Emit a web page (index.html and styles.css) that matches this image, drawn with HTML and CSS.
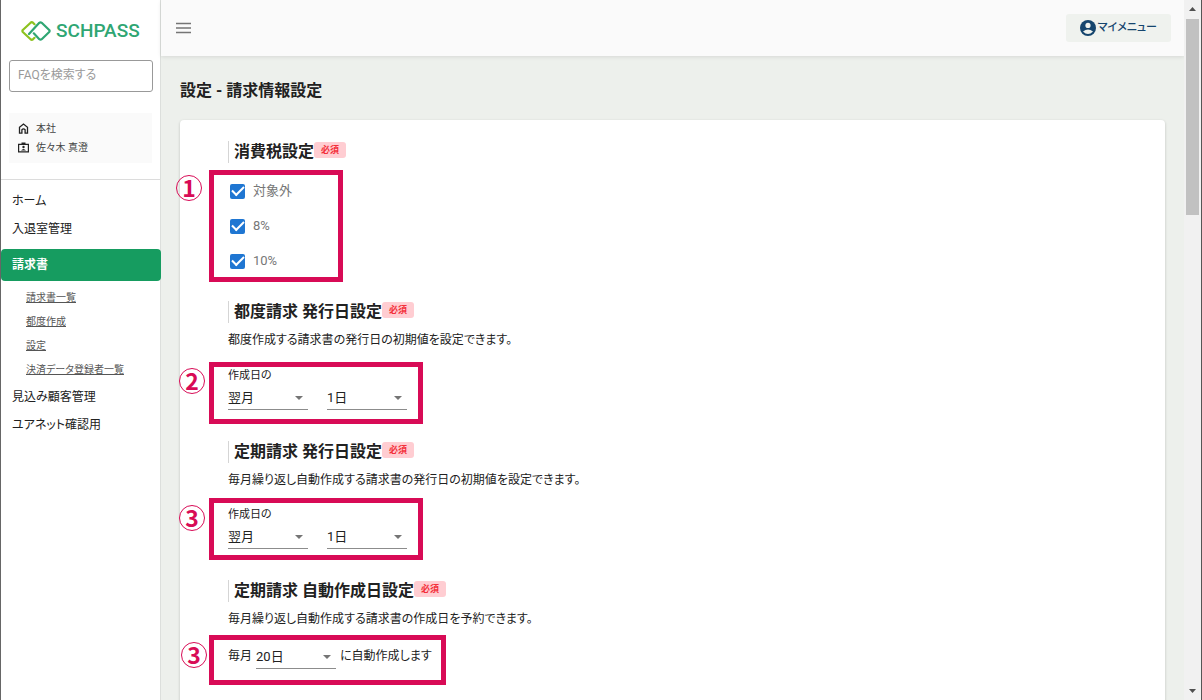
FILE: index.html
```html
<!DOCTYPE html>
<html lang="ja">
<head>
  <meta charset="UTF-8">
  <meta name="viewport" content="width=device-width, initial-scale=1">
  <title>設定 - 請求情報設定</title>
  <link rel="stylesheet" href="styles.css">
</head>
<body>
<aside class="sidebar">
  <a class="logo" href="#">
    <svg width="30" height="20" viewBox="0 0 30 20" fill="none" stroke-width="2.2" stroke-linecap="round" stroke-linejoin="round">
      <path d="M13.5 3.2 L12 1.7 Q10.8 .8 9.6 1.7 L1.8 9 Q1 10 1.8 11 L9.6 18.3 Q10.8 19.2 12 18.3 L13.5 16.8" stroke="#8dc21f"/>
      <path d="M8 13 L18.3 1.8 Q19.5 .8 20.7 1.8 L28.2 9 Q29 10 28.2 11 L20.7 18.2 Q19.5 19.2 18.3 18.2 L12.8 12.3" stroke="#2fa673"/>
    </svg>
    <span>SCHPASS</span>
  </a>
  <input class="search" type="text" placeholder="FAQを検索する" aria-label="FAQを検索する">
  <div class="account">
    <div class="account-row">
      <svg width="10" height="11" viewBox="0 0 10 11" fill="none" stroke="#222" stroke-width="1.3"><path d="M1 4.2 L5 1 L9 4.2 V10.2 H6.6 V6.8 Q5 5 3.4 6.8 V10.2 H1 Z"/></svg>
      <span>本社</span>
    </div>
    <div class="account-row">
      <svg width="11" height="11" viewBox="0 0 11 11"><path d="M.6 2.3 H10.4 V9.8 H.6 Z" fill="none" stroke="#222" stroke-width="1.2"/><path d="M3.5 .5 H7.5 V2.5 H3.5 Z" fill="#222"/><circle cx="5.5" cy="5" r="1.2" fill="#222"/><path d="M3 8.4 Q5.5 5.4 8 8.4 Z" fill="#222"/></svg>
      <span>佐々木 真澄</span>
    </div>
  </div>
  <nav class="nav">
    <a class="nav-item" href="#">ホーム</a>
    <a class="nav-item" href="#">入退室管理</a>
    <a class="nav-item active" href="#">請求書</a>
    <a class="nav-sub" href="#">請求書一覧</a>
    <a class="nav-sub" href="#">都度作成</a>
    <a class="nav-sub" href="#">設定</a>
    <a class="nav-sub" href="#">決済データ登録者一覧</a>
    <a class="nav-item" href="#">見込み顧客管理</a>
    <a class="nav-item" href="#">ユアネット確認用</a>
  </nav>
</aside>

<div class="main">
  <header class="topbar">
    <button class="menu-button" type="button" aria-label="メニュー">
      <svg width="16" height="12" viewBox="0 0 16 12" stroke="#757575" stroke-width="1.4"><path d="M0 1.5 H15 M0 6 H15 M0 10.5 H15"/></svg>
    </button>
    <button class="my-menu" type="button">
      <svg width="16" height="16" viewBox="0 0 16 16"><circle cx="8" cy="8" r="8" fill="#15456e"/><circle cx="8" cy="5.4" r="2.6" fill="#eff2ee"/><path d="M3 11.6 Q8 7.4 13 11.6 Q8 16.6 3 11.6 Z" fill="#eff2ee"/></svg>
      <span>マイメニュー</span>
    </button>
  </header>

  <main class="content">
    <h1>設定 - 請求情報設定</h1>
    <form class="card">
      <section>
        <h2>消費税設定<span class="required">必須</span></h2>
        <div class="frame frame-tax">
          <span class="number">1</span>
          <label class="check"><input type="checkbox" checked>対象外</label>
          <label class="check"><input type="checkbox" checked>8%</label>
          <label class="check"><input type="checkbox" checked>10%</label>
        </div>
      </section>

      <section>
        <h2>都度請求 発行日設定<span class="required">必須</span></h2>
        <p>都度作成する請求書の発行日の初期値を設定できます。</p>
        <div class="frame frame-once">
          <span class="number">2</span>
          <label class="field-label" for="onceMonth">作成日の</label>
          <div class="fields">
            <div class="select"><select id="onceMonth"><option>翌月</option></select></div>
            <div class="select"><select aria-label="日"><option>1日</option></select></div>
          </div>
        </div>
      </section>

      <section>
        <h2>定期請求 発行日設定<span class="required">必須</span></h2>
        <p>毎月繰り返し自動作成する請求書の発行日の初期値を設定できます。</p>
        <div class="frame frame-regular">
          <span class="number">3</span>
          <label class="field-label" for="regularMonth">作成日の</label>
          <div class="fields">
            <div class="select"><select id="regularMonth"><option>翌月</option></select></div>
            <div class="select"><select aria-label="日"><option>1日</option></select></div>
          </div>
        </div>
      </section>

      <section>
        <h2>定期請求 自動作成日設定<span class="required">必須</span></h2>
        <p>毎月繰り返し自動作成する請求書の作成日を予約できます。</p>
        <div class="frame frame-auto">
          <span class="number">3</span>
          <label for="autoDay">毎月</label>
          <div class="select"><select id="autoDay"><option>20日</option></select></div>
          <span>に自動作成します</span>
        </div>
      </section>
    </form>
  </main>
</div>

<div class="scrollbar">
  <svg width="7" height="4" viewBox="0 0 7 4"><path d="M0 4 L3.5 0 L7 4 Z" fill="#505050"/></svg>
  <div class="thumb"></div>
  <svg width="7" height="4" viewBox="0 0 7 4"><path d="M0 0 L3.5 4 L7 0 Z" fill="#505050"/></svg>
</div>
</body>
</html>
```

FILE: styles.css
```css
* { box-sizing: border-box; }
body { margin: 0; height: 100vh; display: flex; overflow: hidden; border-left: 1px solid #666; border-right: 1px solid #555; background: #edf0ec; color: #212121; font-family: Roboto, "Noto Sans CJK JP", sans-serif; font-size: 13px; line-height: 20px; font-feature-settings: "palt"; }
button, input, select { font: inherit; color: inherit; font-feature-settings: inherit; }
svg { display: block; flex: none; }

/* sidebar */
.sidebar { width: 160px; flex: none; background: #fff; border-right: 1px solid #dcdfdc; }
.logo { display: flex; align-items: center; gap: 5px; height: 60px; padding: 2px 0 0 20px; color: #2fa673; font-size: 19px; font-weight: 500; text-decoration: none; }
.search { display: block; width: 144px; height: 32px; margin: 0 8px; padding: 0 8px 2px; border: 1px solid #999; border-radius: 3px; background: #fff; font-size: 12px; }
.search::placeholder { color: #9a9a9a; opacity: 1; }
.account { margin: 21px 8px 16px; padding: 6px 9px; background: #fafafa; font-size: 10px; }
.account-row { display: flex; align-items: center; gap: 7px; height: 19px; color: #444; }
.account-row svg { width: 11px; }
.nav { padding-top: 7px; border-top: 1px solid #dcdcdc; display: flex; flex-direction: column; }
.nav-item { padding: 4px 11px; color: #212121; font-size: 12px; text-decoration: none; }
.nav-item.active { margin: 6px -1px 5px 0; padding: 6px 11px; border-radius: 4px; background: #169c60; color: #fff; font-weight: 700; }
.nav-sub { padding: 2px 25px; color: #555; font-size: 10px; text-decoration: underline; white-space: nowrap; }
.nav-sub + .nav-item { margin-top: 1px; }

/* header */
.main { flex: 1; min-width: 0; display: flex; flex-direction: column; }
.topbar { display: flex; flex: none; align-items: center; justify-content: space-between; height: 56px; padding: 0 13px 0 15px; background: #fafafa; box-shadow: 0 1px 4px rgba(0,0,0,0.1); }
.menu-button { padding: 0; border: none; background: none; }
.my-menu { display: flex; align-items: center; gap: 2px; height: 28px; padding: 0 14px; border: none; border-radius: 3px; background: #eff2ee; color: #15456e; font-size: 11px; font-weight: 500; }

/* settings */
.content { padding: 24px 19px 0; }
h1, h2 { font-size: 16px; line-height: 22px; font-weight: 700; font-feature-settings: normal; }
h1 { margin: 0 0 18px; }
.card { min-height: 100vh; padding: 21px 48px; border-radius: 4px; background: #fff; box-shadow: 0 1px 3px rgba(0,0,0,0.2); }
h2 { display: flex; align-items: flex-start; margin: 0; padding-left: 5px; border-left: 1px solid #d5d5d5; }
.required { margin-top: 1px; padding: 0 7px; border-radius: 3px; background: #ffcdd2; color: #f3303a; font-size: 9px; line-height: 16px; }
p { margin: 7px 0 0; font-size: 12px; }

/* numbered frames */
.frame { position: relative; width: fit-content; margin-left: -19px; padding-left: 14px; border: 5px solid #d80b56; }
.number { position: absolute; left: -38px; width: 26px; height: 26px; border: 1px solid #d80b56; border-radius: 50%; color: #d80b56; font-family: "Noto Sans CJK JP", sans-serif; font-size: 23px; line-height: 22px; font-weight: 700; text-align: center; }
.frame-tax { display: flex; flex-direction: column; justify-content: center; width: 134px; height: 112px; margin-top: 7px; margin-bottom: 19px; padding-left: 16px; }
.frame-tax .number { top: 0; }
.frame-once { width: 214px; margin-top: 12px; margin-bottom: 17px; padding-bottom: 9px; }
.frame-once .number { top: 1px; left: -35px; }
.frame-regular { width: 214px; margin-top: 8px; margin-bottom: 20px; padding-top: 3px; padding-bottom: 6px; }
.frame-regular .number { top: 2px; left: -35px; }
.frame-auto { display: flex; align-items: flex-start; gap: 4px; height: 50px; margin-top: 6px; padding-top: 6px; padding-right: 9px; font-size: 12px; }
.frame-auto .number { top: 2px; left: -33px; }
.check { display: flex; flex: none; align-items: center; gap: 8px; height: 35px; color: #777; }
.check input { appearance: none; display: grid; place-items: center; width: 15px; height: 15px; margin: 0; border-radius: 2px; background: #1f76d2; }
.check input::after { content: ""; width: 10px; height: 5px; margin-top: -3px; border: solid #fff; border-width: 0 0 2px 2px; transform: rotate(-45deg); }
.field-label { display: block; font-size: 11px; line-height: 18px; }
.fields { display: flex; gap: 19px; margin-top: 2px; }
.select { position: relative; width: 80px; font-size: 13px; }
.select select { appearance: none; display: block; width: 100%; height: 23px; padding: 0; border: none; border-bottom: 1px solid #8c8c8c; border-radius: 0; background: none; }
.select::after { content: ""; position: absolute; top: 9px; right: 5px; border: 4px solid transparent; border-top-color: #757575; border-bottom: 0; pointer-events: none; }

/* scrollbar */
.scrollbar { display: flex; flex: none; flex-direction: column; align-items: center; width: 17px; padding: 7px 0; background: #f1f1f1; }
.thumb { width: 13px; height: 28vh; margin: 8px 0 auto; background: #c1c1c1; }
```
